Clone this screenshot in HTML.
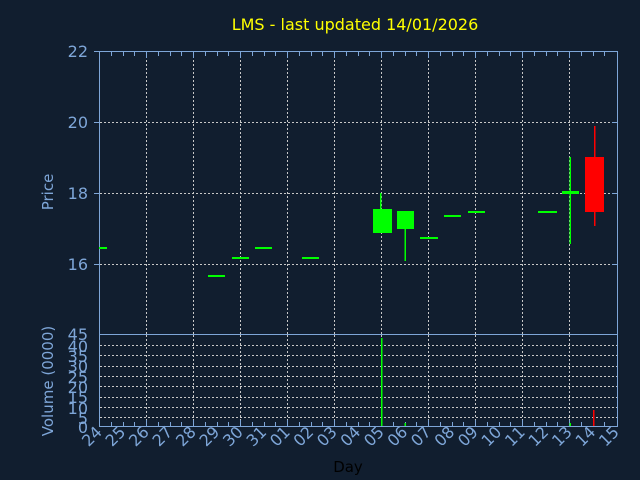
<!DOCTYPE html>
<html><head><meta charset="utf-8"><style>
html,body{margin:0;padding:0;background:#111e2f;}
svg{display:block;font-family:"DejaVu Sans","Liberation Sans",sans-serif;}
</style></head><body>
<svg width="640" height="480" viewBox="0 0 640 480" xmlns="http://www.w3.org/2000/svg">
<rect width="640" height="480" fill="#111e2f"/>
<text x="355" y="30" fill="#ffff00" font-size="16" text-anchor="middle">LMS - last updated 14/01/2026</text>
<g stroke="#c8c8c8" stroke-width="1" stroke-dasharray="2,2" fill="none">
<path d="M146.5 52V334M193.5 52V334M240.5 52V334M287.5 52V334M334.5 52V334M381.5 52V334M428.5 52V334M475.5 52V334M522.5 52V334M569.5 52V334"/>
<path d="M100 122.5H617M100 193.5H617M100 264.5H617"/>
<path d="M146.5 335V426M193.5 335V426M240.5 335V426M287.5 335V426M334.5 335V426M381.5 335V426M428.5 335V426M475.5 335V426M522.5 335V426M569.5 335V426"/>
<path d="M100 345.5H617M100 355.5H617M100 366.5H617M100 376.5H617M100 386.5H617M100 397.5H617M100 407.5H617M100 417.5H617"/>
</g>
<g stroke="#7ea6d8" stroke-width="1" fill="none">
<rect x="99.5" y="51.5" width="518" height="375"/>
<path d="M99.5 334.5H617.5"/>
<path d="M94 51.5H100M94 122.5H100M94 193.5H100M94 264.5H100M612 122.5H618M612 193.5H618M612 264.5H618"/>
<path id="tk" d="M111.5 52v4M123.5 52v4M134.5 52v4M146.5 52v6M158.5 52v4M170.5 52v4M181.5 52v4M193.5 52v6M205.5 52v4M217.5 52v4M228.5 52v4M240.5 52v6M252.5 52v4M264.5 52v4M275.5 52v4M287.5 52v6M299.5 52v4M311.5 52v4M322.5 52v4M334.5 52v6M346.5 52v4M358.5 52v4M369.5 52v4M381.5 52v6M393.5 52v4M405.5 52v4M416.5 52v4M428.5 52v6M440.5 52v4M452.5 52v4M463.5 52v4M475.5 52v6M487.5 52v4M499.5 52v4M510.5 52v4M522.5 52v6M534.5 52v4M546.5 52v4M557.5 52v4M569.5 52v6M581.5 52v4M593.5 52v4M604.5 52v4"/>
<g transform="translate(0,374) scale(1,-1) translate(0,-52)"><path d="M111.5 0v0"/></g>
<path d="M111.5 426v-4M123.5 426v-4M134.5 426v-4M146.5 426v-6M158.5 426v-4M170.5 426v-4M181.5 426v-4M193.5 426v-6M205.5 426v-4M217.5 426v-4M228.5 426v-4M240.5 426v-6M252.5 426v-4M264.5 426v-4M275.5 426v-4M287.5 426v-6M299.5 426v-4M311.5 426v-4M322.5 426v-4M334.5 426v-6M346.5 426v-4M358.5 426v-4M369.5 426v-4M381.5 426v-6M393.5 426v-4M405.5 426v-4M416.5 426v-4M428.5 426v-6M440.5 426v-4M452.5 426v-4M463.5 426v-4M475.5 426v-6M487.5 426v-4M499.5 426v-4M510.5 426v-4M522.5 426v-6M534.5 426v-4M546.5 426v-4M557.5 426v-4M569.5 426v-6M581.5 426v-4M593.5 426v-4M604.5 426v-4"/>
</g>
<g fill="#7ea6d8" font-size="16" text-anchor="end">
<text x="88" y="57">22</text><text x="88" y="128">20</text><text x="88" y="199">18</text><text x="88" y="270">16</text>
<text x="88" y="340">45</text><text x="88" y="352">40</text><text x="88" y="362">35</text><text x="88" y="372">30</text><text x="88" y="383">25</text><text x="88" y="393">20</text><text x="88" y="403">15</text><text x="88" y="414">10</text><text x="88" y="424">5</text><text x="88" y="433">0</text>
</g>
<text transform="translate(53,192) rotate(-90)" fill="#7ea6d8" font-size="15" text-anchor="middle">Price</text>
<text transform="translate(53,381) rotate(-90)" fill="#7ea6d8" font-size="15" text-anchor="middle">Volume (0000)</text>
<text x="348" y="472" fill="#000" font-size="15" text-anchor="middle">Day</text>
<g fill="#7ea6d8" font-size="16" text-anchor="end">
<text transform="translate(103,433) rotate(-45)">24</text>
<text transform="translate(126.5,433) rotate(-45)">25</text>
<text transform="translate(150,433) rotate(-45)">26</text>
<text transform="translate(173.5,433) rotate(-45)">27</text>
<text transform="translate(197,433) rotate(-45)">28</text>
<text transform="translate(220.5,433) rotate(-45)">29</text>
<text transform="translate(244,433) rotate(-45)">30</text>
<text transform="translate(267.5,433) rotate(-45)">31</text>
<text transform="translate(291,433) rotate(-45)">01</text>
<text transform="translate(314.5,433) rotate(-45)">02</text>
<text transform="translate(338,433) rotate(-45)">03</text>
<text transform="translate(361.5,433) rotate(-45)">04</text>
<text transform="translate(385,433) rotate(-45)">05</text>
<text transform="translate(408.5,433) rotate(-45)">06</text>
<text transform="translate(432,433) rotate(-45)">07</text>
<text transform="translate(455.5,433) rotate(-45)">08</text>
<text transform="translate(479,433) rotate(-45)">09</text>
<text transform="translate(502.5,433) rotate(-45)">10</text>
<text transform="translate(526,433) rotate(-45)">11</text>
<text transform="translate(549.5,433) rotate(-45)">12</text>
<text transform="translate(573,433) rotate(-45)">13</text>
<text transform="translate(596.5,433) rotate(-45)">14</text>
<text transform="translate(620,433) rotate(-45)">15</text>
</g>
<g fill="#00ff00">
<rect x="99" y="247" width="8" height="2"/>
<rect x="208" y="275" width="17" height="2"/>
<rect x="232" y="257" width="17" height="2"/>
<rect x="255" y="247" width="17" height="2"/>
<rect x="302" y="257" width="17" height="2"/>
<rect x="380" y="193" width="1.5" height="17"/>
<rect x="373" y="209" width="19" height="24"/>
<rect x="397" y="211" width="17" height="18"/>
<rect x="404.5" y="229" width="1.5" height="32"/>
<rect x="420" y="237" width="18" height="2"/>
<rect x="444" y="215" width="17" height="2"/>
<rect x="468" y="211" width="17" height="2"/>
<rect x="538" y="211" width="19" height="2"/>
<rect x="569.5" y="157" width="1.5" height="87"/>
<rect x="562" y="191" width="17" height="3"/>
<rect x="381" y="338" width="1.5" height="88"/>
<rect x="404.5" y="423" width="1.5" height="3"/>
<rect x="569.5" y="423" width="1.5" height="3"/>
</g>
<g fill="#ff0000">
<rect x="594" y="126" width="1.5" height="100"/>
<rect x="585" y="157" width="19" height="55"/>
<rect x="593" y="410" width="1.5" height="16"/>
</g>
</svg>
</body></html>
